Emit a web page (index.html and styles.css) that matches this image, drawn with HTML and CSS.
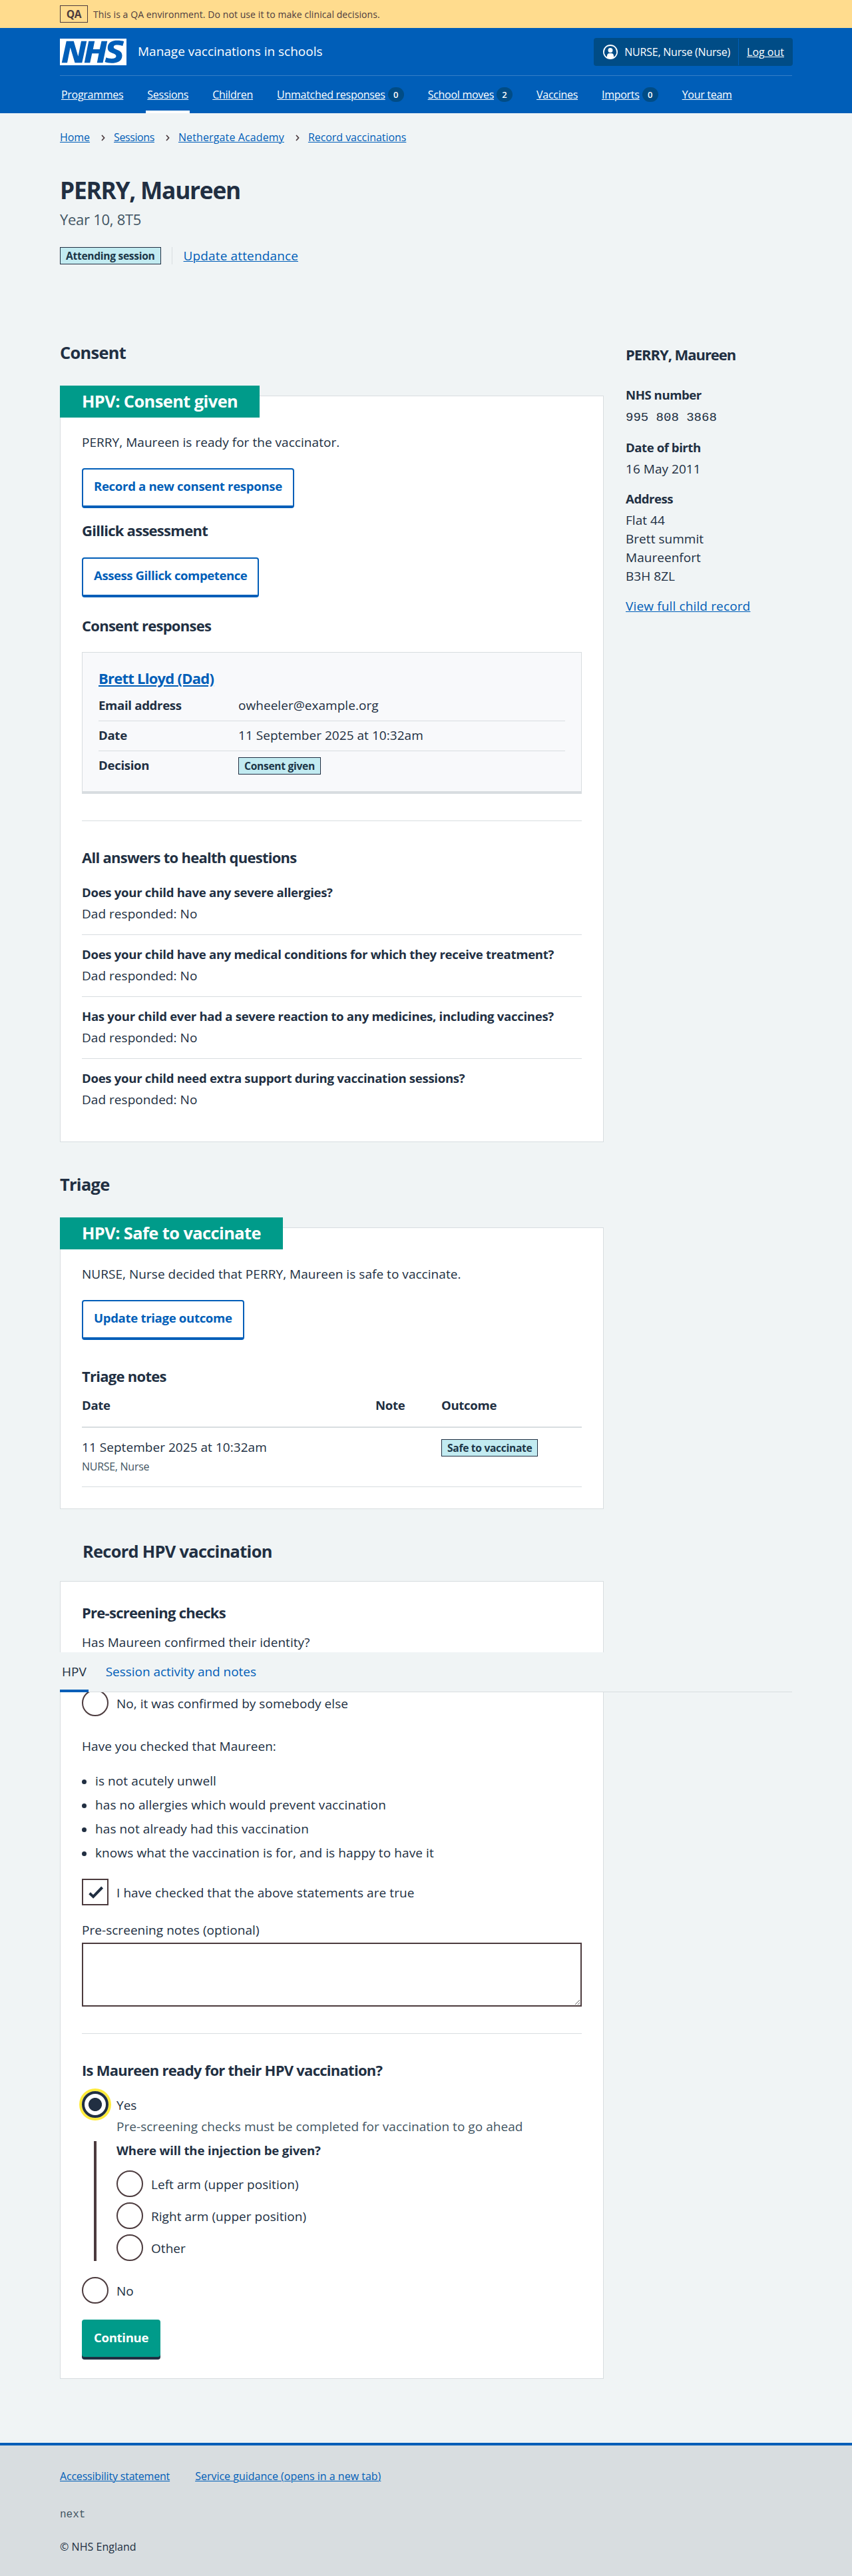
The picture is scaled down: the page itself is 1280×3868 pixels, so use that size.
FILE: index.html
```html
<!DOCTYPE html>
<html lang="en">
<head>
<meta charset="utf-8">
<title>PERRY, Maureen – Manage vaccinations in schools</title>
<link rel="stylesheet" href="styles.css">
</head>
<body>
<div class="env-banner">
  <div class="container env-banner__inner">
    <strong class="env-banner__tag">QA</strong>
    <span>This is a QA environment. Do not use it to make clinical decisions.</span>
  </div>
</div>

<header class="header">
  <div class="container">
    <div class="header__top">
      <svg class="header__logo" viewBox="0 0 200 80" width="100" height="40" role="img" aria-label="NHS"><path fill="#fff" d="M200 0v80H0V0h200Zm-27.5 5.5c-14.5 0-29 5-29 22 0 10.2 7.7 13.5 14.7 16.3l.7.3c5.4 2 10.1 3.9 10.1 8.4 0 6.5-8.5 7.5-14 7.5s-12.5-1.5-16-3.5L135 70c5.5 2 13.5 3.5 20 3.5 15.5 0 32-4.5 32-22.5 0-19.5-25.5-16.5-25.5-25.5 0-5.5 5.5-6.5 12.5-6.5a35 35 0 0 1 14.5 3l4-13.5c-4.5-2-12-3-20-3Zm-131 2h-22l-14 65H22l9-45h.5l13.5 45h21.5l14-65H64l-9 45h-.5l-13-45Zm63 0h-18l-13 65h17l6-28H117l-5.5 28H129l13.5-65H125L119.5 32h-20l5-24.5Z"/></svg>
      <span class="header__name">Manage vaccinations in schools</span>
      <div class="account">
        <div class="account__user">
          <svg viewBox="0 0 24 24" width="24" height="24" aria-hidden="true"><path fill="#fff" d="M12 1a11 11 0 1 1 0 22 11 11 0 0 1 0-22Zm0 2a9 9 0 0 0-5 16.5V18a4 4 0 0 1 4-4h2a4 4 0 0 1 4 4v1.5A9 9 0 0 0 12 3Zm0 3a3.5 3.5 0 1 1-3.5 3.5A3.4 3.4 0 0 1 12 6Z"/></svg>
          <span>NURSE, Nurse (Nurse)</span>
        </div>
        <a class="account__logout" href="#">Log out</a>
      </div>
    </div>
    <nav class="nav">
      <div class="nav__item"><a href="#">Programmes</a></div>
      <div class="nav__item nav__item--current"><a href="#">Sessions</a></div>
      <div class="nav__item"><a href="#">Children</a></div>
      <div class="nav__item"><a href="#">Unmatched responses</a><span class="nav__count">0</span></div>
      <div class="nav__item"><a href="#">School moves</a><span class="nav__count">2</span></div>
      <div class="nav__item"><a href="#">Vaccines</a></div>
      <div class="nav__item"><a href="#">Imports</a><span class="nav__count">0</span></div>
      <div class="nav__item"><a href="#">Your team</a></div>
    </nav>
  </div>
</header>

<div class="container main">
  <nav class="breadcrumb">
    <a href="#">Home</a>
    <svg viewBox="0 0 6 10" width="6" height="10"><path d="M1 1l3.6 4L1 9"/></svg>
    <a href="#" class="breadcrumb__narrow">Sessions</a>
    <svg viewBox="0 0 6 10" width="6" height="10"><path d="M1 1l3.6 4L1 9"/></svg>
    <a href="#" class="breadcrumb__wide">Nethergate Academy</a>
    <svg viewBox="0 0 6 10" width="6" height="10"><path d="M1 1l3.6 4L1 9"/></svg>
    <a href="#">Record vaccinations</a>
  </nav>

  <h1 class="page-title">PERRY, Maureen</h1>
  <p class="page-caption">Year 10, 8T5</p>
  <div class="status-row">
    <strong class="tag">Attending session</strong>
    <a class="status-row__action link" href="#">Update attendance</a>
  </div>

  <div class="columns">
    <main class="columns__main">
      <h2 class="section-title">Consent</h2>
      <section class="card card--consent">
        <h3 class="ribbon">HPV: Consent given</h3>
        <p class="lead">PERRY, Maureen is ready for the vaccinator.</p>
        <a class="button button--secondary" href="#">Record a new consent response</a>
        <h4 class="heading heading--gillick">Gillick assessment</h4>
        <a class="button button--secondary button--gillick" href="#">Assess Gillick competence</a>
        <h4 class="heading heading--responses">Consent responses</h4>
        <div class="response">
          <h5 class="response__name"><a href="#">Brett Lloyd (Dad)</a></h5>
          <dl class="summary">
            <div class="summary__row"><dt>Email address</dt><dd>owheeler@example.org</dd></div>
            <div class="summary__row"><dt>Date</dt><dd>11 September 2025 at 10:32am</dd></div>
            <div class="summary__row"><dt>Decision</dt><dd><strong class="tag tag--cell">Consent given</strong></dd></div>
          </dl>
        </div>
        <hr class="rule">
        <h4 class="heading">All answers to health questions</h4>
        <dl class="answers">
          <div class="answers__row"><dt>Does your child have any severe allergies?</dt><dd>Dad responded: No</dd></div>
          <div class="answers__row"><dt>Does your child have any medical conditions for which they receive treatment?</dt><dd>Dad responded: No</dd></div>
          <div class="answers__row"><dt>Has your child ever had a severe reaction to any medicines, including vaccines?</dt><dd>Dad responded: No</dd></div>
          <div class="answers__row"><dt>Does your child need extra support during vaccination sessions?</dt><dd>Dad responded: No</dd></div>
        </dl>
      </section>

      <h2 class="section-title section-title--next">Triage</h2>
      <section class="card card--triage">
        <h3 class="ribbon">HPV: Safe to vaccinate</h3>
        <p class="lead">NURSE, Nurse decided that PERRY, Maureen is safe to vaccinate.</p>
        <a class="button button--secondary" href="#">Update triage outcome</a>
        <h4 class="heading heading--notes">Triage notes</h4>
        <table class="notes">
          <colgroup><col class="notes__date"><col class="notes__note"><col></colgroup>
          <thead><tr><th>Date</th><th>Note</th><th>Outcome</th></tr></thead>
          <tbody><tr>
            <td>11 September 2025 at 10:32am<div class="notes__author">NURSE, Nurse</div></td>
            <td></td>
            <td><strong class="tag tag--cell">Safe to vaccinate</strong></td>
          </tr></tbody>
        </table>
      </section>

      <h2 class="section-title section-title--next section-title--inset">Record HPV vaccination</h2>
      <section class="card card--record">
        <h3 class="heading heading--first">Pre-screening checks</h3>
        <p class="question">Has Maureen confirmed their identity?</p>
        <label class="choice choice--identity"><span class="radio"></span><span>No, it was confirmed by somebody else</span></label>
        <p class="checks-intro">Have you checked that Maureen:</p>
        <ul class="checks">
          <li>is not acutely unwell</li>
          <li>has no allergies which would prevent vaccination</li>
          <li>has not already had this vaccination</li>
          <li>knows what the vaccination is for, and is happy to have it</li>
        </ul>
        <label class="choice choice--confirm">
          <span class="checkbox"><svg viewBox="0 0 36 36" width="36" height="36"><path d="M9.6 19.8l5.5 5.2L28.6 11"/></svg></span>
          <span>I have checked that the above statements are true</span>
        </label>
        <label class="notes-label" for="notes">Pre-screening notes (optional)</label>
        <textarea class="textarea" id="notes"></textarea>
        <hr class="rule">
        <h3 class="heading">Is Maureen ready for their HPV vaccination?</h3>
        <label class="choice choice--yes"><span class="radio radio--selected"></span><span>Yes</span></label>
        <p class="hint">Pre-screening checks must be completed for vaccination to go ahead</p>
        <div class="conditional">
          <h4 class="conditional__title">Where will the injection be given?</h4>
          <div class="conditional__choices">
            <label class="choice"><span class="radio"></span><span>Left arm (upper position)</span></label>
            <label class="choice"><span class="radio"></span><span>Right arm (upper position)</span></label>
            <label class="choice"><span class="radio"></span><span>Other</span></label>
          </div>
        </div>
        <label class="choice choice--no"><span class="radio"></span><span>No</span></label>
        <button class="button button--primary" type="button">Continue</button>
      </section>
    </main>

    <aside class="columns__aside">
      <h2 class="child-name">PERRY, Maureen</h2>
      <dl class="child">
        <dt>NHS number</dt><dd class="child__number">995 808 3868</dd>
        <dt>Date of birth</dt><dd>16 May 2011</dd>
        <dt>Address</dt><dd>Flat 44<br>Brett summit<br>Maureenfort<br>B3H 8ZL</dd>
      </dl>
      <a class="link child__link" href="#">View full child record</a>
    </aside>
  </div>

  <nav class="tabs">
    <a class="tabs__item tabs__item--current" href="#">HPV</a>
    <a class="tabs__item" href="#">Session activity and notes</a>
  </nav>
</div>

<footer class="footer">
  <div class="container">
    <div class="footer__links"><a class="footer__statement" href="#">Accessibility statement</a><a href="#">Service guidance (opens in a new tab)</a></div>
    <p class="footer__release">next</p>
    <p class="footer__copy">© NHS England</p>
  </div>
</footer>
</body>
</html>
```
FILE: styles.css
```css
* { box-sizing: border-box; }
body {
  margin: 0;
  background: #f0f4f5;
  color: #212f42;
  font: 400 19px/28px "Open Sans", "Noto Sans", sans-serif;
  letter-spacing: 0.04px;
}
h1, h2, h3, h4, h5, p, dl, dd, ul { margin: 0; padding: 0; }
h1, h2, h3, h4, h5, dt, th, strong { font-weight: 700; }
a { color: #005eb8; text-decoration-thickness: 1px; text-underline-offset: 1px; }
svg { display: block; flex: none; }
.container { width: 1100px; margin: 0 auto; }
.link { letter-spacing: 0.14px; }

/* Environment banner */
.env-banner { height: 42px; background: #ffdc8e; color: #4c3b3e; }
.env-banner__inner { display: flex; align-items: center; gap: 8px; height: 42px; font-size: 14px; line-height: 20px; letter-spacing: 0.08px; }
.env-banner__inner span { padding-top: 1px; }
.env-banner__tag { width: 42px; height: 26px; border: 1px solid #4c3b3e; font-size: 15.6px; line-height: 24px; text-align: center; letter-spacing: -0.4px; }

/* Header */
.header { height: 128px; background: #005eb8; color: #fff; }
.header a { color: #fff; }
.header__top { display: flex; align-items: center; height: 72px; border-bottom: 1px solid #347ec6; padding-top: 1px; }
.header__name { margin: -2px auto 0 17px; letter-spacing: 0; }
.account { display: flex; align-items: center; height: 42px; margin-right: -1px; border-radius: 4px; background: #004c86; font-size: 16px; line-height: 24px; letter-spacing: -0.22px; }
.account__user { display: flex; align-items: center; gap: 9px; height: 40px; padding: 0 12px 0 13px; border-right: 1px solid #005eb8; }
.account__logout { padding: 0 13px 0 12px; letter-spacing: 0; }
.nav { display: flex; gap: 32px; height: 56px; font-size: 16px; line-height: 24px; letter-spacing: -0.28px; }
.nav__item { display: flex; align-items: center; padding: 0 2px; }
.nav__item--current { border-bottom: 4px solid #fff; padding-top: 4px; }
.nav__count { width: 24px; height: 22px; margin-left: 4px; border-radius: 12px; background: #004c86; font-size: 13px; font-weight: 600; line-height: 22px; text-align: center; letter-spacing: 0; }

/* Page heading */
.main { position: relative; }
.breadcrumb { display: flex; align-items: center; padding-top: 24px; font-size: 16px; line-height: 24px; letter-spacing: -0.05px; }
.breadcrumb svg { margin: 1px 13px 0 17px; fill: none; stroke: #4c3b3e; stroke-width: 1.7; }
.breadcrumb__narrow { letter-spacing: -0.4px; }
.breadcrumb__wide { letter-spacing: 0.12px; }
.page-title { margin-top: 45px; font-size: 35.3px; line-height: 44px; letter-spacing: -1.25px; }
.page-caption { margin-top: 6px; color: #425563; font-size: 22px; line-height: 32px; letter-spacing: -0.28px; }
.status-row { display: flex; margin-top: 26px; height: 26px; align-items: center; }
.status-row__action { margin-left: 16px; padding-left: 17px; border-left: 1px solid #d8dde0; line-height: 26px; }
.tag { display: block; width: fit-content; padding: 0 8px; border: 1px solid #212f42; background: #c2ebf1; color: #1c3648; font-size: 15.6px; line-height: 24px; letter-spacing: -0.3px; }
.tag--cell { margin-top: 2px; }

.columns { display: grid; grid-template-columns: 817px 1fr; gap: 33px; margin-top: 114px; align-items: start; }
.section-title { font-size: 25.4px; line-height: 36px; letter-spacing: -0.7px; }
.section-title--next { margin-top: 45px; }
.section-title--inset { padding-left: 34px; }

/* Cards */
.card { padding: 0 32px; border: 1px solid #d8dde0; background: #fff; }
.card--consent { margin-top: 47px; padding-bottom: 49px; }
.card--triage { margin-top: 47px; padding-bottom: 32px; }
.card--record { margin-top: 27px; padding-bottom: 28px; }
.ribbon { position: relative; width: fit-content; height: 48px; margin: -16px 0 23px -33px; padding: 0 33px; background: #009b8a; color: #fff; font-size: 25.4px; line-height: 47px; letter-spacing: -0.57px; }
.heading { margin-top: 38px; font-size: 22px; line-height: 32px; letter-spacing: -0.73px; }
.heading--gillick { margin-top: 17px; }
.heading--responses { margin-top: 26px; }
.heading--first { margin-top: 30px; }
.button { display: block; width: fit-content; height: 60px; margin-top: 25px; border-radius: 4px; font: 700 18.6px/28px "Open Sans", "Noto Sans", sans-serif; letter-spacing: -0.33px; text-decoration: none; }
.button--secondary { padding: 11px 16px 15px; border: 2px solid #005eb8; border-bottom-width: 4px; color: #005eb8; }
.button--gillick { letter-spacing: -0.45px; }
.button--primary { height: 56px; margin: 24px 0 4px; padding: 0 18px 2px; border: 0; background: #009b8a; box-shadow: 0 4px 0 #212f42; color: #fff; }
.rule { height: 1px; margin: 40px 0 0; border: 0; background: #d8dde0; }

.response { height: 213px; margin-top: 24px; padding: 22px 24px 16px; border: 1px solid #d8dde0; border-bottom-width: 4px; background: #f8f9fb; }
.response__name { font-size: 22px; line-height: 32px; letter-spacing: -0.75px; }
.response__name a { text-decoration-thickness: 2px; text-underline-offset: 2px; }
.summary { margin-top: 4px; }
.summary__row { display: grid; grid-template-columns: 210px 1fr; padding: 7px 0 9px; border-bottom: 1px solid #d8dde0; }
.summary__row:last-child { border-bottom: 0; }
dt { font-size: 18.6px; letter-spacing: -0.31px; }

.answers { margin-top: 23px; }
.answers__row { display: grid; gap: 4px; }
.answers__row + .answers__row { margin-top: 17px; padding-top: 15px; border-top: 1px solid #d8dde0; }

.notes { width: 100%; margin-top: 14px; border-collapse: separate; border-spacing: 0; table-layout: fixed; }
.heading--notes { margin-top: 38px; }
.notes__date { width: 441px; }
.notes__note { width: 99px; }
.notes th { padding: 0 0 18px; border-bottom: 2px solid #d8dde0; font-size: 18.6px; text-align: left; letter-spacing: -0.33px; }
.notes td { padding: 15px 0 18px; border-bottom: 1px solid #d8dde0; vertical-align: top; }
.notes__author { margin-top: 3px; color: #425563; font-size: 16px; line-height: 24px; letter-spacing: -0.28px; }

/* Recording form */
.question { margin-top: 15px; }
.choice { display: flex; align-items: center; gap: 12px; height: 40px; }
.choice > span:last-child { padding-top: 2px; }
.radio { flex: none; width: 40px; height: 40px; border: 2px solid #4c3b3e; border-radius: 50%; background: #fff; }
.radio--selected { border: 4px solid #212f42; background: radial-gradient(circle, #212f42 9.6px, #fff 10.4px); box-shadow: 0 0 0 4px #ffeb3b; }
.checkbox { flex: none; width: 40px; height: 40px; border: 2px solid #4c3b3e; background: #fff; }
.checkbox path { fill: none; stroke: #212f42; stroke-width: 4; }
.choice--identity { margin-top: 57px; }
.checks-intro { margin-top: 31px; }
.checks { display: grid; gap: 8px; margin-top: 24px; list-style: none; }
.checks li { display: flex; align-items: center; gap: 13px; letter-spacing: 0.1px; }
.checks li::before { content: ""; width: 7px; height: 7px; margin-top: 3px; border-radius: 50%; background: #212f42; }
.choice--confirm { margin-top: 25px; letter-spacing: 0.07px; }
.notes-label { display: block; margin-top: 23px; }
.textarea { display: block; width: 100%; height: 96px; margin-top: 5px; border: 2px solid #4c3b3e; border-radius: 0; background: #fff; }
.choice--yes { margin-top: 16px; }
.hint { margin: -1px 0 0 52px; color: #425563; }
.conditional { height: 180px; margin: 8px 0 0 18px; padding-left: 30px; border-left: 4px solid #4c3b3e; }
.conditional__title { font-size: 18.6px; line-height: 28px; letter-spacing: -0.16px; }
.conditional__choices { display: grid; gap: 8px; margin-top: 16px; }
.choice--no { margin-top: 24px; }

/* Child details */
.child-name { margin-top: 5px; font-size: 22px; line-height: 32px; letter-spacing: -1.05px; }
.child { margin-top: 31px; }
.child dt { margin-top: 17px; letter-spacing: -0.45px; }
.child dd { margin-top: 4px; }
.child .child__number { margin-top: 6px; font-family: "Liberation Mono", monospace; letter-spacing: 0; }
.child__link { display: block; width: fit-content; margin-top: 17px; }

.tabs { position: absolute; left: 0; right: 0; top: 2311px; display: flex; height: 60px; border-bottom: 1px solid #d8dde0; background: #f0f4f5; letter-spacing: -0.03px; }
.tabs__item { height: 60px; margin-right: 23px; padding: 15px 3px 0; text-decoration: none; }
.tabs__item--current { border-bottom: 4px solid #005eb8; color: #212f42; }

/* Footer */
.footer { height: 200px; margin-top: 96px; border-top: 4px solid #005eb8; background: #d8dde0; font-size: 16px; line-height: 24px; }
.footer__links { display: flex; gap: 38px; padding-top: 34px; letter-spacing: 0; }
.footer__statement { letter-spacing: -0.2px; }
.footer__release { margin-top: 34px; color: #425563; font-family: "Liberation Mono", monospace; letter-spacing: 0; }
.footer__copy { margin-top: 24px; }
```
